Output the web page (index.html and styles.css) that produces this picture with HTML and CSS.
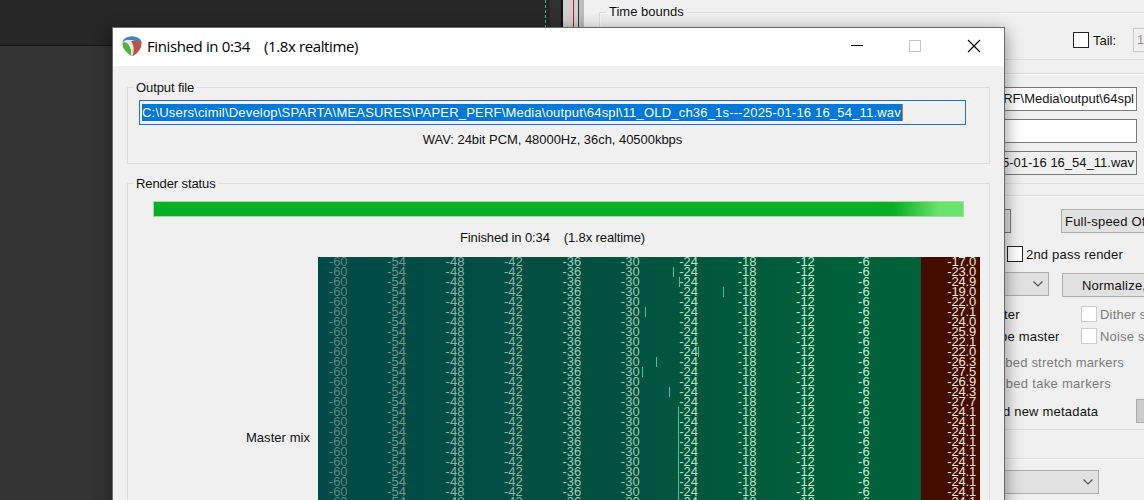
FILE: index.html
```html
<!DOCTYPE html>
<html lang="en">
<head>
<meta charset="utf-8">
<title>Finished in 0:34</title>
<link rel="stylesheet" href="styles.css">
</head>
<body>
<div class="desktop">
  <main class="arrange">
    <div class="ruler"></div>
    <div class="tracks"></div>
  </main>
  <div class="edge"><i class="playhead"></i><i class="gutter"></i><i class="scroll"></i></div>

  <section class="settings">
    <fieldset class="box bounds">
      <legend>Time bounds</legend>
      <div class="line tail-row"><i class="check"></i><span class="tail">Tail:</span><span class="num">1000</span></div>
    </fieldset>
    <fieldset class="box paths">
      <div class="field"><span class="p1">RF\Media\output\64spl</span></div>
      <div class="field"></div>
      <div class="field readonly"><span class="p2">5-01-16 16_54_11.wav</span></div>
    </fieldset>
    <fieldset class="box options">
      <div class="line speed-row"><i class="button stub"></i><span class="button speed">Full-speed Offline</span></div>
      <div class="line pass-row"><i class="check"></i><span>2nd pass render</span></div>
      <div class="line norm-row">
        <span class="select"><svg viewBox="0 0 12 8"><path d="M1.500 1.500 6 6l4.500-4.500"/></svg></span>
        <span class="button norm">Normalize, limit...</span>
      </div>
      <div class="line dither"><span class="cut">ter</span><i class="check off"></i><span class="dim">Dither stems</span></div>
      <div class="line noise"><span class="cut wide">be master</span><i class="check off"></i><span class="dim">Noise shape</span></div>
      <div class="line markers dim"><span>bed stretch markers</span></div>
      <div class="line takes dim"><span>bed take markers</span></div>
      <div class="line meta"><span>d new metadata</span><i class="button"></i></div>
    </fieldset>
    <fieldset class="box format">
      <span class="select"><svg viewBox="0 0 12 8"><path d="M1.500 1.500 6 6l4.500-4.500"/></svg></span>
    </fieldset>
  </section>

  <section class="dialog">
    <header class="titlebar">
      <svg class="logo" viewBox="0 0 20 20">
        <path fill="#3f87bd" d="M.5 5.500Q2.500 .5 10 .2q7.500.3 9.500 5.300L15.500 7Q12 3 7 4.500L2 7z"/>
        <path fill="#bb5149" d="M19.500 5.500q.8 9-8 14.300L9.500 20Q12.500 11 8.500 5.500 13 3.500 15.500 6z"/>
        <path fill="#51b33e" d="M.5 6.500Q4 5 6.500 8q3.500 5 3 12Q-.5 14 .5 6.500z"/>
        <path fill="#e5ece2" d="M.5 6.500Q4 2.500 8.500 4.500 13.500 10 10.800 19.300L9.500 20Q9.300 11 6.200 8 4 5.500.5 6.500z"/>
      </svg>
      <h1>Finished in 0:34 &nbsp;&nbsp; (1.8x realtime)</h1>
      <svg class="controls" viewBox="0 0 132 14">
        <path d="M1 6.500h12" stroke="#000"/>
        <path d="M59.500 1.500h11v11h-11z" stroke="#c4c4c4"/>
        <path d="m118 1 12 12m0-12-12 12" stroke="#000" stroke-width="1.200"/>
      </svg>
    </header>
    <fieldset class="box output">
      <legend>Output file</legend>
      <div class="path"><span>C:\Users\cimil\Develop\SPARTA\MEASURES\PAPER_PERF\Media\output\64spl\11_OLD_ch36_1s---2025-01-16 16_54_11.wav</span></div>
      <p class="wav">WAV: 24bit PCM, 48000Hz, 36ch, 40500kbps</p>
    </fieldset>
    <fieldset class="box status">
      <legend>Render status</legend>
      <div class="progress"></div>
      <p class="done">Finished in 0:34 &nbsp;&nbsp; (1.8x realtime)</p>
      <div class="mix"><span class="mix-name">Master mix</span><div class="meter" id="meter"></div></div>
    </fieldset>
  </section>
</div>
<script src="meter.js"></script>
</body>
</html>
```

FILE: meter.js
```js
const peaks = ["-17.0", "-23.0", "-24.9", "-19.0", "-22.0", "-27.1", "-24.0", "-25.9", "-22.1", "-22.0",
  "-26.3", "-27.5", "-26.9", "-24.3", "-27.7", "-24.1", "-24.1", "-24.1", "-24.1", "-24.1", "-24.1",
  "-24.1", "-24.1", "-24.1", "-24.1"];
// Level tick offsets from the left of the meter, by channel.
const ticks = { 1: 355, 2: 361, 3: 405, 5: 327, 9: 380, 10: 338, 11: 324, 13: 351 };
const scale = [-60, -54, -48, -42, -36, -30, -24, -18, -12, -6];
const meter = document.getElementById("meter");

peaks.forEach((peak, i) => {
  const row = document.createElement("div");
  row.className = "channel";
  const marks = scale.map((db) => `<span>${db}</span>`).join("");
  const x = i > 14 ? 360 : ticks[i];
  const tick = x ? `<i class="tick" style="left:${x}px"></i>` : "";
  row.innerHTML = `<div class="scale">${marks}</div><b class="peak">${peak}</b>${tick}`;
  meter.append(row);
});
```

FILE: styles.css
```css
* { box-sizing: border-box; }
body { margin: 0; overflow: hidden; font: 13px/16px "Liberation Sans", Arial, sans-serif; color: #111; }
p, h1 { margin: 0; font-weight: 400; }
.desktop { position: relative; width: 1144px; height: 500px; overflow: hidden; background: #333; display: flex; }
svg { fill: none; display: block; }
span { white-space: nowrap; }

.arrange { width: 545px; }
.ruler { height: 46px; background: #262626; border-bottom: 1px solid #151515; }
.tracks { height: 454px; background: #333; }
.edge { width: 39px; display: flex; background: #292929; }
.edge i { flex: none; }
.playhead { width: 1px; background: repeating-linear-gradient(#1fc490 0 3px, #222 3px 5px); }
.gutter { width: 17px; background: linear-gradient(90deg, #252525 4px, #303030 4px 15px, #111 15px); }
.scroll { width: 21px; background: linear-gradient(90deg, #cfcfcf 0 10px, #c01818 10px 11px, #d0d0d0 11px 15px, #333 15px 16px, #bbb 16px); }

.settings { width: 560px; background: #f0f0f0; overflow: hidden; padding: 4px 0 0 15px; }
.box { margin: 0; padding: 0; border: 1px solid #dcdcdc; min-width: 0; }
legend { margin-left: 6px; padding: 0 3px; height: 16px; }
.settings .box { width: 570px; box-shadow: inset 1px 1px #f8f8f8; }
.line { display: flex; align-items: center; }
.check { width: 16px; height: 16px; flex: none; border: 1px solid #222; background: #fff; }
.check.off { border-color: #ccc; }
.dim { color: #7b7b7b; }
.button { flex: none; height: 24px; border: 1px solid #adadad; background: #e1e1e1; line-height: 24px; }
.bounds { height: 56px; }
.tail-row { height: 24px; margin: 8px 0 0 473px; }
.tail { width: 41px; padding: 1px 0 0 4px; flex: none; }
.num { margin-left: 3px; height: 24px; width: 60px; border: 1px solid #ccc; padding: 3px; color: #a88f83; }
.paths { margin-top: 13px; height: 111px; padding-top: 13px; display: flex; flex-direction: column; gap: 8px; }
.field { width: 537px; height: 24px; border: 1px solid #7a7a7a; background: #fff; padding: 3px 2px; text-align: right; }
.readonly { background: #f0f0f0; }
.options { margin-top: 11px; height: 235px; padding-top: 13px; letter-spacing: .2px; }
.speed-row { height: 24px; }
.stub { width: 411px; border-color: #777; }
.speed { margin-left: 50px; width: 130px; padding-left: 3px; }
.pass-row { height: 16px; margin: 13px 0 0 407px; gap: 3px; }
.pass-row span, .dither span, .noise span { padding-top: 1px; }
.norm-row { height: 25px; margin-top: 10px; }
.select { width: 449px; height: 24px; border: 1px solid #adadad; background: #e1e1e1; display: flex; justify-content: flex-end; align-items: center; padding-right: 4px; flex: none; }
.norm-row .select { margin-top: -1px; }
.select svg { width: 12px; height: 8px; stroke: #555; stroke-width: 1.2; }
.norm { margin: 1px 0 0 13px; width: 140px; padding-left: 19px; }
.dither { height: 16px; margin-top: 9px; }
.noise { height: 16px; margin-top: 6px; }
.cut { width: 77px; flex: none; margin-left: 404px; }
.cut.wide { margin-left: 400px; width: 81px; }
.options .off { margin-right: 3px; }
.markers { height: 16px; margin-top: 11px; width: 524px; justify-content: flex-end; letter-spacing: .2px; }
.takes { height: 16px; margin-top: 5px; width: 511px; justify-content: flex-end; letter-spacing: .3px; }
.meta { height: 24px; margin-top: 7px; padding-left: 403px; }
.meta span { width: 133px; flex: none; padding-top: 1px; }
.meta .button { width: 50px; background: #ccc; }
.format { margin-top: 28px; height: 60px; padding-top: 11px; }
.format .select { width: 499px; }

.dialog { position: absolute; left: 112px; top: 27px; width: 893px; height: 520px; border: 1px solid #6b6b6b; background: #f0f0f0; box-shadow: 0 4px 16px rgba(0,0,0,.45); }
.dialog legend { margin-left: 5px; line-height: 18px; letter-spacing: -.1px; }
.titlebar { height: 38px; background: #fff; display: flex; align-items: center; padding: 0 22px 0 9px; }
.logo { width: 20px; height: 20px; margin-top: -2px; }
.titlebar h1 { flex: 1; margin: -2px 0 0 5px; font: 15px/20px "Open Sans", sans-serif; letter-spacing: -.38px; color: #000; }
.controls { width: 132px; height: 14px; margin-top: -2px; }
.dialog .box { margin-left: 14px; width: 863px; }
.output { margin-top: 13px; height: 85px; }
.path { margin: 5px 0 0 11px; width: 827px; height: 25px; border: 1px solid #2672b8; padding: 3px 2px; }
.path span { display: block; width: 761px; height: 17px; line-height: 17px; background: #0078d7; color: #fff; border-right: 1px solid #d87928; letter-spacing: .195px; }
.wav { margin-top: 7px; text-align: center; width: 849px; letter-spacing: -.04px; }
.status { margin-top: 11px; height: 370px; }
.progress { margin: 10px 0 0 25px; width: 811px; height: 16px; border: 1px solid #a5d8aa; background: linear-gradient(90deg, #06b025 740px, #6ae36c 785px); }
.done { margin-top: 13px; width: 849px; text-align: center; letter-spacing: -.12px; }
.mix { margin-top: 11px; display: flex; }
.mix-name { width: 182px; margin: 173px 8px 0 0; text-align: right; letter-spacing: .05px; }
.meter { width: 662px; height: 260px; overflow: hidden; background: linear-gradient(90deg, #014a47, #02503f 43%, #00603a 78%, #006038 603px, #450c00 603px); }
.channel { position: relative; height: 10px; line-height: 10px; display: flex; justify-content: space-between; padding-right: 4px; }
.scale { display: flex; margin-left: -9px; width: 584px; }
.scale span { flex: 1; text-align: center; color: #8fb5a8; }
.scale span:nth-child(1) { color: #5f8583; }
.scale span:nth-child(2) { color: #709792; }
.scale span:nth-child(n+5) { color: #a3c9ba; }
.scale span:nth-child(n+7) { color: #b7e3ca; }
.scale span:nth-child(n+9) { color: #c3f3d8; }
.peak { font-weight: 400; color: #f3e6dc; letter-spacing: -.2px; }
.tick { position: absolute; top: 0; width: 1px; height: 10px; background: #25d0a0; }
```
